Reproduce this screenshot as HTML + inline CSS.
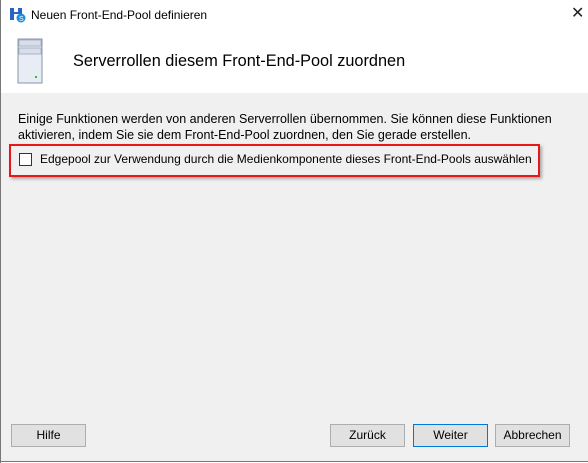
<!DOCTYPE html>
<html><head><style>
body{margin:0;width:588px;height:463px;position:relative;overflow:hidden;background:#fff;font-family:"Liberation Sans",sans-serif;font-size:12px;color:#000}
.abs{position:absolute}
.btn{position:absolute;top:424px;width:73px;height:21px;border:1px solid #adadad;background:#e1e1e1;text-align:center;line-height:21px;font-size:12px}
</style></head><body>
<div class="abs" style="left:0;top:0;width:1px;height:463px;background:#777"></div>
<div class="abs" style="left:1px;top:93px;width:587px;height:368px;background:#f0f0f0"></div>
<div class="abs" style="left:0;top:461px;width:588px;height:1px;background:#777"></div>
<svg class="abs" style="left:9px;top:7px" width="18" height="16"><rect x="1" y="1" width="4" height="12" fill="#2a63c4"/><rect x="9" y="1" width="4" height="6" fill="#2a63c4"/><rect x="4" y="5" width="6" height="2" fill="#2a63c4"/><circle cx="12" cy="11" r="4.5" fill="#1e8ee0"/><text x="10" y="14" font-size="7" fill="#fff" font-family="Liberation Sans">S</text></svg>
<div class="abs" style="left:31px;top:8px;font-size:12px">Neuen Front-End-Pool definieren</div>
<div class="abs" style="left:571px;top:3px;font-size:16px;color:#222">✕</div>
<svg class="abs" style="left:17px;top:38px" width="28" height="47"><rect x="1" y="1" width="24" height="44" fill="#e8ecf4" stroke="#8a96aa"/><rect x="2" y="2" width="22" height="6" fill="#d8deea" stroke="#aab4c6"/><rect x="2" y="10" width="22" height="6" fill="#d8deea" stroke="#aab4c6"/><rect x="18" y="38" width="2" height="2" fill="#1ec81e"/></svg>
<div class="abs" style="left:73px;top:52px;font-size:16.3px">Serverrollen diesem Front-End-Pool zuordnen</div>
<div class="abs" style="left:18px;top:111px;line-height:16px;font-size:12.5px">Einige Funktionen werden von anderen Serverrollen übernommen. Sie können diese Funktionen<br>aktivieren, indem Sie sie dem Front-End-Pool zuordnen, den Sie gerade erstellen.</div>
<div class="abs" style="left:9px;top:144px;width:527px;height:29px;border:2px solid #e81818;box-shadow:2px 2px 3px rgba(0,0,0,.3)"></div>
<div class="abs" style="left:19px;top:153px;width:11px;height:11px;border:1px solid #333;background:#fff"></div>
<div class="abs" style="left:40px;top:152px">Edgepool zur Verwendung durch die Medienkomponente dieses Front-End-Pools auswählen</div>
<div class="btn" style="left:11px">Hilfe</div>
<div class="btn" style="left:330px">Zurück</div>
<div class="btn" style="left:413px;border-color:#0078d7">Weiter</div>
<div class="btn" style="left:495px">Abbrechen</div>
</body></html>
